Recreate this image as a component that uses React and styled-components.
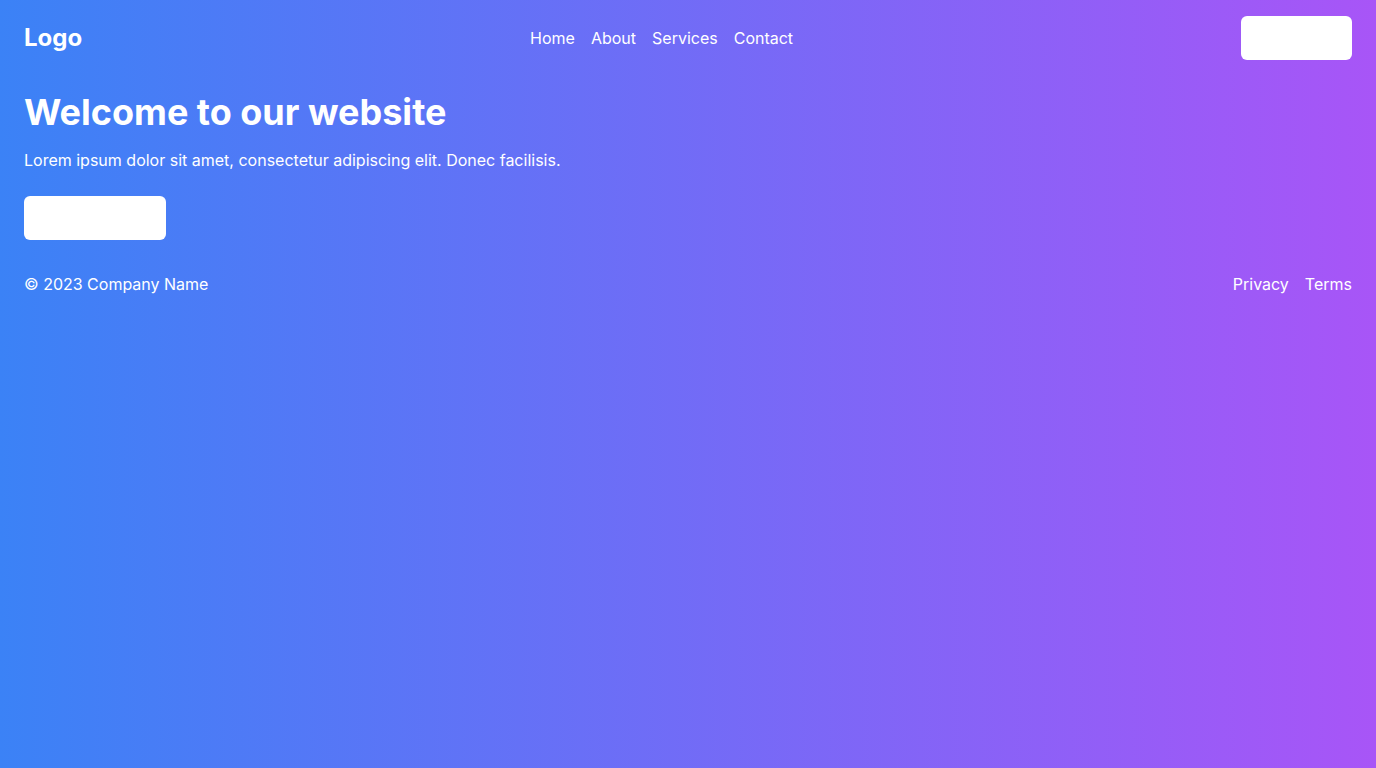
import React from "react";
import styled, { createGlobalStyle } from "styled-components";

const GlobalStyle = createGlobalStyle`
  * {
    box-sizing: border-box;
  }
  body {
    margin: 0;
    font-family: Inter, "Liberation Sans", sans-serif;
  }
`;

const Page = styled.div`
  min-height: 100vh;
  background: linear-gradient(to right, #3b82f6, #a855f7);
  color: #ffffff;
  display: flex;
  flex-direction: column;
`;

const Header = styled.header`
  display: flex;
  align-items: center;
  justify-content: space-between;
  padding: 16px 24px;
`;

const Logo = styled.div`
  font-size: 24px;
  line-height: 32px;
  font-weight: 700;
`;

const Nav = styled.nav`
  display: flex;
  gap: 16px;
`;

const Link = styled.a`
  color: #ffffff;
  text-decoration: none;
  font-size: 16px;
  line-height: 24px;
`;

const Button = styled.button`
  height: 44px;
  width: ${(p) => p.$w}px;
  border: none;
  border-radius: 6px;
  background: #ffffff;
  color: #ffffff;
  font-family: inherit;
  font-size: 16px;
  font-weight: 600;
`;

const Hero = styled.main`
  padding: 16px 24px;
`;

const Title = styled.h1`
  margin: 0;
  font-size: 36px;
  line-height: 40px;
  font-weight: 700;
`;

const Lead = styled.p`
  margin: 16px 0 24px;
  font-size: 16px;
  line-height: 24px;
`;

const Footer = styled.footer`
  display: flex;
  justify-content: space-between;
  align-items: center;
  padding: 16px 24px;
  font-size: 16px;
  line-height: 24px;
`;

const FooterLinks = styled.div`
  display: flex;
  gap: 16px;
`;

export default function App() {
  return (
    <Page>
      <GlobalStyle />
      <Header>
        <Logo>Logo</Logo>
        <Nav>
          <Link href="#">Home</Link>
          <Link href="#">About</Link>
          <Link href="#">Services</Link>
          <Link href="#">Contact</Link>
        </Nav>
        <Button $w={111}>Sign Up</Button>
      </Header>
      <Hero>
        <Title>Welcome to our website</Title>
        <Lead>
          Lorem ipsum dolor sit amet, consectetur adipiscing elit. Donec facilisis.
        </Lead>
        <Button $w={142}>Get Started</Button>
      </Hero>
      <Footer>
        <span>© 2023 Company Name</span>
        <FooterLinks>
          <Link href="#">Privacy</Link>
          <Link href="#">Terms</Link>
        </FooterLinks>
      </Footer>
    </Page>
  );
}
